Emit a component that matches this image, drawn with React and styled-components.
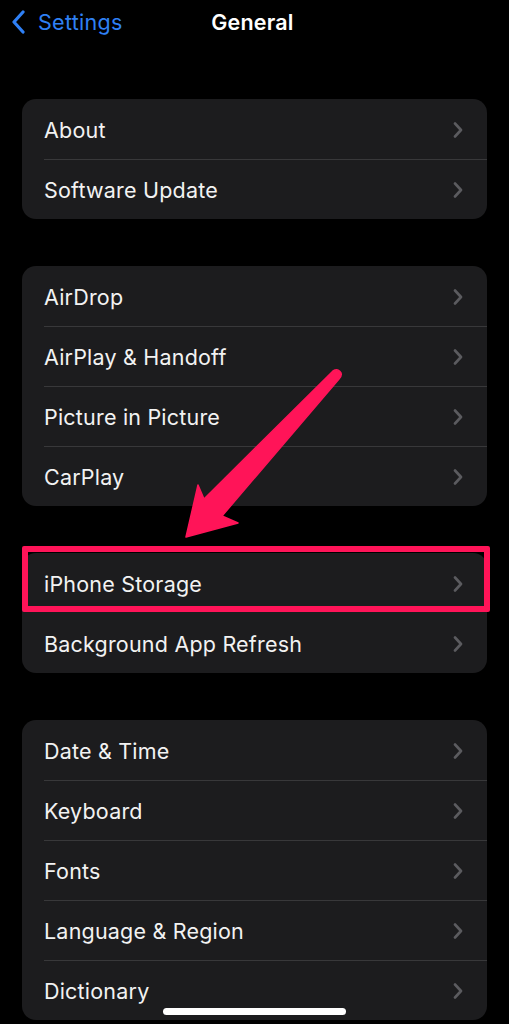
import React from 'react';
import styled, { createGlobalStyle } from 'styled-components';

const GlobalStyle = createGlobalStyle`
  html, body { margin: 0; padding: 0; background: #000; }
  body { font-family: Inter, "Noto Sans", sans-serif; -webkit-font-smoothing: antialiased; }
`;

const Screen = styled.div`
  position: relative;
  width: 509px;
  height: 1024px;
  overflow: hidden;
  background: #000;
`;

const NavBar = styled.div`
  display: grid;
  grid-template-columns: 1fr auto 1fr;
  align-items: center;
  height: 44px;
  padding: 0 10px;
`;

const BackButton = styled.div`
  display: flex;
  align-items: center;
  gap: 12px;
  color: #2f80f5;
  font-size: 21.5px;
  letter-spacing: 0.3px;
`;

const Title = styled.div`
  color: #fff;
  font-size: 21.5px;
  font-weight: 600;
  letter-spacing: 0.2px;
  transform: translateX(-2px);
`;

const List = styled.div`
  display: flex;
  flex-direction: column;
  gap: 47px;
  padding: 55px 22px 0;
`;

const Group = styled.div`
  background: #1c1c1e;
  border-radius: 14px;
`;

const Row = styled.div`
  position: relative;
  display: flex;
  align-items: center;
  justify-content: space-between;
  height: 60px;
  padding: 2px 24px 0 22px;
  box-sizing: border-box;
  color: #f2f2f2;
  font-size: 21.5px;
  letter-spacing: 0.2px;

  & + &::before {
    content: '';
    position: absolute;
    top: 0;
    left: 22px;
    right: 0;
    border-top: 1px solid #38383a;
  }

  ${p => p.$highlight && `
    &::after {
      content: '';
      position: absolute;
      top: -7px;
      bottom: 1px;
      left: 0;
      right: -3px;
      border: 6px solid #ff1458;
      border-radius: 2px;
    }
  `}
`;

const Chevron = styled.svg`
  width: 10px;
  height: 16px;
  flex: none;
`;

const Arrow = styled.svg`
  position: absolute;
  left: 0;
  top: 0;
  pointer-events: none;
`;

const HomeIndicator = styled.div`
  position: absolute;
  left: 163px;
  top: 1008px;
  width: 183px;
  height: 7px;
  border-radius: 4px;
  background: #fff;
`;

const groups = [
  [{ label: 'About' }, { label: 'Software Update' }],
  [{ label: 'AirDrop' }, { label: 'AirPlay & Handoff' }, { label: 'Picture in Picture' }, { label: 'CarPlay' }],
  [{ label: 'iPhone Storage', highlight: true }, { label: 'Background App Refresh' }],
  [{ label: 'Date & Time' }, { label: 'Keyboard' }, { label: 'Fonts' }, { label: 'Language & Region' }, { label: 'Dictionary' }],
];

function RowChevron() {
  return (
    <Chevron viewBox="0 0 10 16">
      <path d="M2 1.5 L8 8 L2 14.5" fill="none" stroke="#5b5b5f" strokeWidth="2.6" strokeLinecap="round" strokeLinejoin="round" />
    </Chevron>
  );
}

export default function App() {
  return (
    <Screen>
      <GlobalStyle />
      <NavBar>
        <BackButton>
          <svg width="16" height="24" viewBox="0 0 16 24">
            <path d="M13 2 L4 12 L13 22" fill="none" stroke="#2f80f5" strokeWidth="3.2" strokeLinecap="round" strokeLinejoin="round" />
          </svg>
          Settings
        </BackButton>
        <Title>General</Title>
        <div />
      </NavBar>

      <List>
        {groups.map((rows, gi) => (
          <Group key={gi}>
            {rows.map(r => (
              <Row key={r.label} $highlight={r.highlight}>
                {r.label}
                <RowChevron />
              </Row>
            ))}
          </Group>
        ))}
      </List>

      <Arrow width="509" height="1024" viewBox="0 0 509 1024">
        <path
          d="M186 537 L198 485 L204 499 L333 371 Q338 368 341 373 Q342 376 339 379 L222 516 L238 523 Z"
          fill="#ff1458"
          stroke="#ff1458"
          strokeWidth="1.5"
          strokeLinejoin="round"
        />
      </Arrow>
      <HomeIndicator />
    </Screen>
  );
}
